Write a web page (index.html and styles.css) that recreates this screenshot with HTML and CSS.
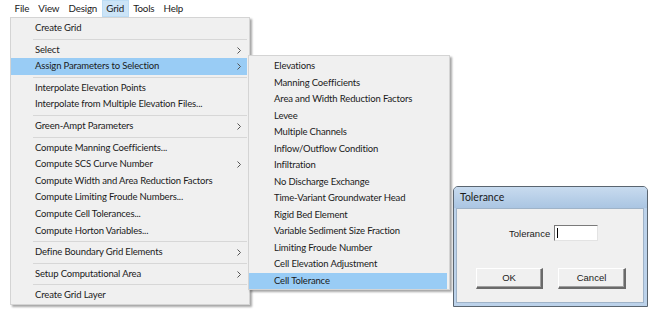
FILE: index.html
```html
<!DOCTYPE html>
<html lang="en">
<head>
<meta charset="UTF-8">
<meta name="viewport" content="width=device-width, initial-scale=1.0">
<title>Grid Menu</title>
<link rel="stylesheet" href="styles.css">
</head>
<body>

<div class="menubar">
  <span class="bar-item">File</span>
  <span class="bar-item">View</span>
  <span class="bar-item">Design</span>
  <span class="bar-item active">Grid</span>
  <span class="bar-item">Tools</span>
  <span class="bar-item">Help</span>
</div>

<div class="menu main-menu">
  <div class="menu-item">Create Grid</div>
  <div class="separator"></div>
  <div class="menu-item">Select <svg class="arrow" width="4" height="7" viewBox="0 0 4 7"><path d="M0.5 0.5 L3.5 3.5 L0.5 6.5" /></svg></div>
  <div class="menu-item selected">Assign Parameters to Selection <svg class="arrow" width="4" height="7" viewBox="0 0 4 7"><path d="M0.5 0.5 L3.5 3.5 L0.5 6.5" /></svg></div>
  <div class="separator"></div>
  <div class="menu-item">Interpolate Elevation Points</div>
  <div class="menu-item">Interpolate from Multiple Elevation Files...</div>
  <div class="separator"></div>
  <div class="menu-item">Green-Ampt Parameters <svg class="arrow" width="4" height="7" viewBox="0 0 4 7"><path d="M0.5 0.5 L3.5 3.5 L0.5 6.5" /></svg></div>
  <div class="separator"></div>
  <div class="menu-item">Compute Manning Coefficients...</div>
  <div class="menu-item">Compute SCS Curve Number <svg class="arrow" width="4" height="7" viewBox="0 0 4 7"><path d="M0.5 0.5 L3.5 3.5 L0.5 6.5" /></svg></div>
  <div class="menu-item">Compute Width and Area Reduction Factors</div>
  <div class="menu-item">Compute Limiting Froude Numbers...</div>
  <div class="menu-item">Compute Cell Tolerances...</div>
  <div class="menu-item">Compute Horton Variables...</div>
  <div class="separator"></div>
  <div class="menu-item">Define Boundary Grid Elements <svg class="arrow" width="4" height="7" viewBox="0 0 4 7"><path d="M0.5 0.5 L3.5 3.5 L0.5 6.5" /></svg></div>
  <div class="separator"></div>
  <div class="menu-item">Setup Computational Area <svg class="arrow" width="4" height="7" viewBox="0 0 4 7"><path d="M0.5 0.5 L3.5 3.5 L0.5 6.5" /></svg></div>
  <div class="separator"></div>
  <div class="menu-item">Create Grid Layer</div>
</div>

<div class="menu sub-menu">
  <div class="menu-item">Elevations</div>
  <div class="menu-item">Manning Coefficients</div>
  <div class="menu-item">Area and Width Reduction Factors</div>
  <div class="menu-item">Levee</div>
  <div class="menu-item">Multiple Channels</div>
  <div class="menu-item">Inflow/Outflow Condition</div>
  <div class="menu-item">Infiltration</div>
  <div class="menu-item">No Discharge Exchange</div>
  <div class="menu-item">Time-Variant Groundwater Head</div>
  <div class="menu-item">Rigid Bed Element</div>
  <div class="menu-item">Variable Sediment Size Fraction</div>
  <div class="menu-item">Limiting Froude Number</div>
  <div class="menu-item">Cell Elevation Adjustment</div>
  <div class="menu-item selected">Cell Tolerance</div>
</div>

<div class="dialog">
  <div class="dialog-title">Tolerance</div>
  <div class="dialog-body">
    <div class="field-row">
      <label for="tolerance" class="field-label">Tolerance</label>
      <div class="field-input" id="tolerance"><span class="caret"></span></div>
    </div>
    <div class="button-row">
      <div class="button">OK</div>
      <div class="button">Cancel</div>
    </div>
  </div>
</div>

</body>
</html>
```

FILE: styles.css
```css
body {
  margin: 0;
  width: 657px;
  height: 315px;
  position: relative;
  overflow: hidden;
  background: #fff;
  color: #1a1a1a;
  font-family: "Lato", "Noto Sans", sans-serif;
}

/* menu bar */
.menubar {
  display: flex;
  height: 17px;
  padding-left: 10px;
  font-size: 9.8px;
  letter-spacing: -0.2px;
  line-height: 17px;
}
.bar-item {
  padding: 0 4.6px;
}
.bar-item.active {
  background: #cce4f7;
  box-shadow: inset 0 0 0 1px #bcdcf4;
}

/* drop down menus */
.menu {
  position: absolute;
  background: #f0f0f0;
  border: 1px solid #d4d4d4;
  box-shadow: 2px 2px 2px rgba(0, 0, 0, 0.35);
  font-size: 9.5px;
  letter-spacing: -0.15px;
  box-sizing: border-box;
  padding: 2px 2px 0 0;
}
.main-menu {
  left: 10px;
  top: 17px;
  width: 240px;
  height: 288px;
}
.sub-menu {
  left: 248px;
  top: 55px;
  width: 202px;
  height: 235px;
}
.menu-item {
  height: 16.6px;
  line-height: 16.6px;
  padding-left: 24px;
  position: relative;
  white-space: nowrap;
}
.sub-menu .menu-item {
  height: 16.5px;
  line-height: 16.5px;
  padding-left: 25px;
}
.menu-item.selected {
  background: #99ccf5;
}
.arrow {
  position: absolute;
  right: 6px;
  top: 5px;
  fill: none;
  stroke: #555;
  stroke-width: 1;
}
.separator {
  height: 5px;
  margin-left: 22px;
  position: relative;
}
.separator::after {
  content: "";
  position: absolute;
  left: 0;
  right: 0;
  top: 2px;
  border-top: 1px solid #d7d7d7;
}

/* dialog window */
.dialog {
  position: absolute;
  left: 453px;
  top: 186px;
  width: 195px;
  height: 121px;
  box-sizing: border-box;
  border: 1px solid #5a6570;
  border-radius: 5px 5px 0 0;
  background: #bcd2ea;
  padding: 0 3px 3px 2px;
  display: flex;
  flex-direction: column;
}
.dialog-title {
  height: 21px;
  line-height: 20px;
  font-size: 10.5px;
  background: linear-gradient(#c8dbef, #aac5e2);
  margin: 0 -3px 0 -2px;
  padding-left: 6px;
  border-radius: 4px 4px 0 0;
}
.dialog-body {
  flex: 1;
  background: #f0f0f0;
  border: 1px solid #9fb3c8;
  font-family: "Liberation Sans", Arial, sans-serif;
  font-size: 9.5px;
}
.field-row {
  display: flex;
  align-items: center;
  margin-top: 16px;
  padding-left: 52px;
}
.field-label {
  margin-right: 4px;
}
.field-input {
  width: 44px;
  height: 16px;
  box-sizing: border-box;
  background: #fff;
  border-top: 1px solid #7a7a7a;
  border-left: 1px solid #7a7a7a;
  border-right: 1px solid #e3e3e3;
  border-bottom: 1px solid #e3e3e3;
  position: relative;
}
.caret {
  position: absolute;
  left: 2px;
  top: 2px;
  width: 1px;
  height: 10px;
  background: #000;
}
.button-row {
  display: flex;
  gap: 15px;
  margin-top: 27px;
  padding-left: 19px;
}
.button {
  width: 67px;
  height: 21px;
  box-sizing: border-box;
  line-height: 18px;
  text-align: center;
  background: #f0f0f0;
  border-top: 1px solid #fff;
  border-left: 1px solid #fff;
  border-right: 2px solid #6a6a6a;
  border-bottom: 2px solid #6a6a6a;
  box-shadow: inset -1px -1px 0 #a0a0a0;
}
.button + .button {
  width: 68px;
}
```
